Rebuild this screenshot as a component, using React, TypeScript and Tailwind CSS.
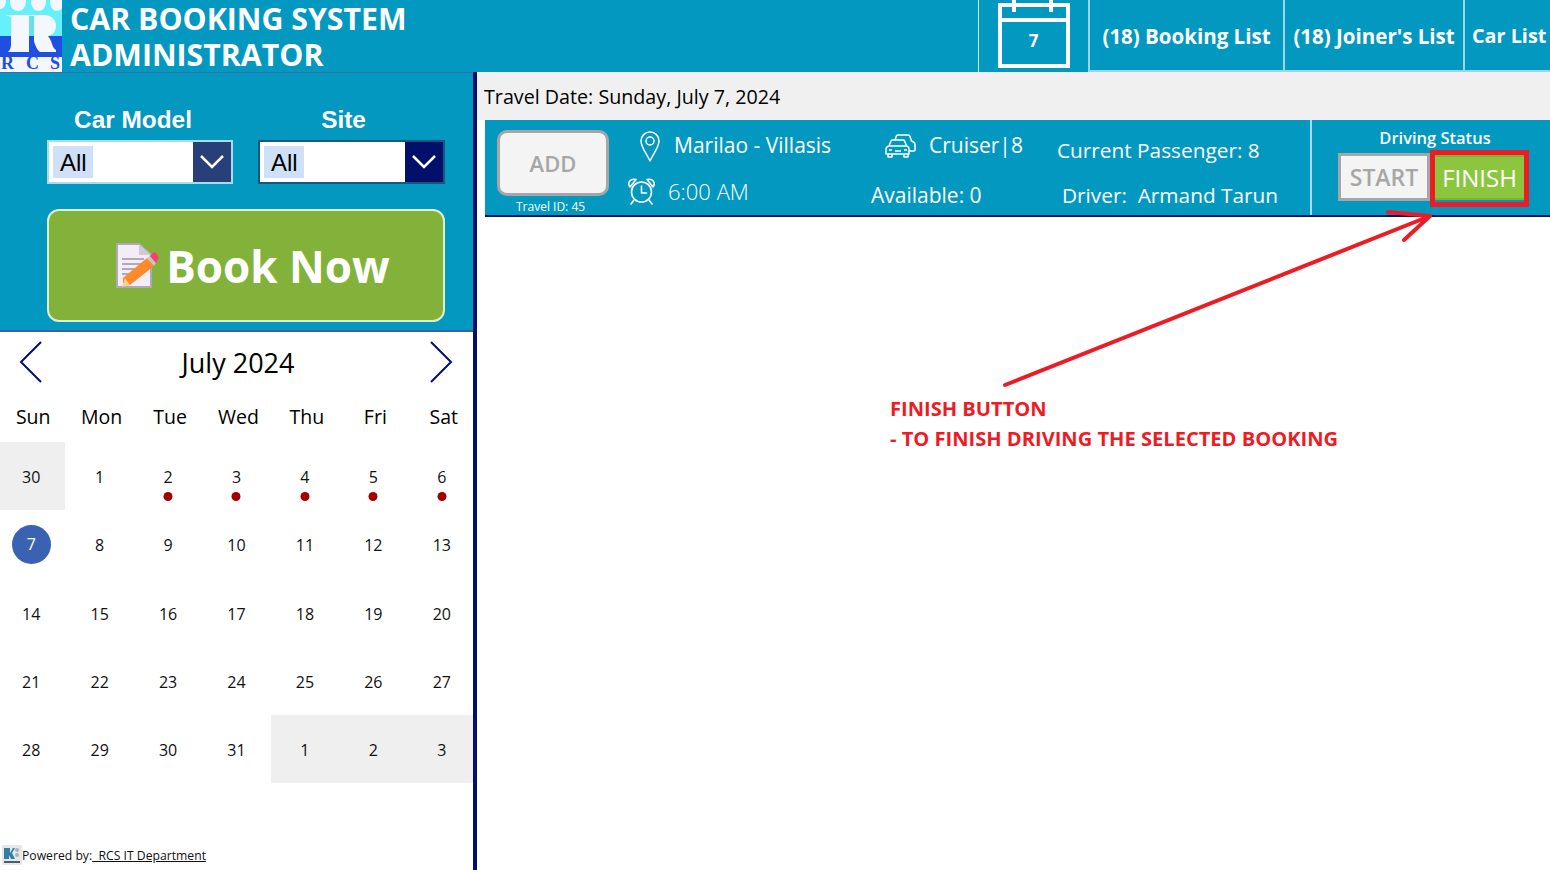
import React from "react";

const font = "font-['Open_Sans','Noto_Sans',sans-serif]";

const days = ["Sun", "Mon", "Tue", "Wed", "Thu", "Fri", "Sat"];
const cells = [
  30, 1, 2, 3, 4, 5, 6, 7, 8, 9, 10, 11, 12, 13, 14, 15, 16, 17, 18, 19, 20, 21, 22, 23, 24, 25, 26, 27, 28, 29, 30, 31,
  1, 2, 3,
];

function Logo() {
  return (
    <svg width="62" height="72" viewBox="0 0 62 72" className="shrink-0">
      <rect width="62" height="72" fill="#66f0fb" />
      <rect y="36" width="62" height="21" fill="#1f4fe0" />
      <rect y="57" width="62" height="15" fill="#f5f7ff" />
      <path d="M0 0h6c0 5-2 9-6 9zM10 0h16c0 7-3 11-8 11s-8-4-8-11zM31 0h15c0 7-3 11-7.500 11S31 7 31 0zM50 0h12v8c-1 2-3 3-5 3-4 0-7-4-7-11z" fill="#f5f7ff" />
      <path d="M6 15h38c8 0 12 5 12 11 0 5-3 9-8 10 2 2 3 5 4 8 1 3 2 5 4 6v2H40c-3-2-5-7-6-11v-5h-5v16H8c2-2 3-4 3-8V17z" fill="#f5f7ff" />
      <rect x="29" y="16" width="5" height="20" fill="#66e0ee" />
      <rect x="29" y="36" width="4" height="16" fill="#1f4fe0" />
      <g fontFamily="'Liberation Serif',serif" fontWeight="700" fontSize="18" fill="#1f4fe0">
        <text x="1" y="69">R</text>
        <text x="26" y="69">C</text>
        <text x="50" y="69">S</text>
      </g>
    </svg>
  );
}

function CalendarIcon() {
  return (
    <svg width="72" height="68" viewBox="0 0 72 68" fill="none" stroke="#fff" strokeWidth="4" className="shrink-0">
      <path d="M2 5h68v61H2zM2 20h68M16 0v12M53 0v12" />
    </svg>
  );
}

function PinIcon() {
  return (
    <svg width="20" height="31" viewBox="0 0 20 31" fill="none" stroke="#fff" strokeWidth="1.500" strokeLinejoin="round" className="shrink-0">
      <path d="M10 30C6.500 22 1 16.500 1 10a9 9 0 0 1 18 0c0 6.500-5.500 12-9 20z" />
      <circle cx="10" cy="10" r="4" />
    </svg>
  );
}

function ClockIcon() {
  return (
    <svg width="29" height="28" viewBox="0 0 29 28" fill="none" stroke="#fff" strokeWidth="1.600" strokeLinecap="round" strokeLinejoin="round" className="shrink-0">
      <circle cx="14.500" cy="15" r="10" />
      <path d="M14.500 9v7h5" />
      <path d="M3 10C0 6 3 1 9 2.500zM26 10c3-4 0-9-6-7.500z" />
      <path d="M7 23l-3 4M22 23l3 4" />
    </svg>
  );
}

function CarsIcon() {
  return (
    <svg width="31" height="24" viewBox="0 0 31 24" fill="none" stroke="#fff" strokeWidth="1.500" strokeLinejoin="round" className="shrink-0">
      <path d="M10 6l1.500-4.200C11.800 1 12.400 1 13 1h10c1 0 1.500.4 1.800 1l1.700 5c2 .6 3.500 1.600 3.500 3.500V16c0 .6-.5 1-1 1h-5" />
      <path d="M4 12l2-5c.3-.7.8-1 1.500-1H18c.8 0 1.300.3 1.600 1l2 5c1.600.5 2.400 1.500 2.400 3v5H1v-5c0-1.500 1.300-2.500 3-3zM4 12h18M3 20v3h4v-3M19 20v3h4v-3M4 16h3M19 16h3M10 17h6" />
    </svg>
  );
}

function NoteIcon() {
  return (
    <svg width="43" height="46" viewBox="0 0 43 46" className="shrink-0">
      <path d="M1 1h22l12 11v32H1z" fill="#f2edf8" stroke="#b0a8b8" strokeWidth="2" strokeLinejoin="round" />
      <path d="M23 1v11h12z" fill="#cfcad6" />
      <path d="M6 16h22M6 21h22M6 26h18M6 31h12" stroke="#9d90a6" strokeWidth="1.500" />
      <path d="M7 35l24-20 7 8-24 19-7 1z" fill="#ff8a2b" />
      <path d="M9 35l5 7-8 2z" fill="#ffd18b" />
      <path d="M31 15l3-2 6 7-2 3z" fill="#c9c4cf" />
      <path d="M34 13l3-3c1-1 2-1 3 0l2 3c1 1 1 2 0 3l-2 4z" fill="#ff3d6e" />
    </svg>
  );
}

function TinyLogo() {
  return (
    <svg width="20" height="20" viewBox="0 0 20 20" className="shrink-0 -mt-[3px]">
      <rect width="20" height="20" fill="#e4e8ea" />
      <path d="M2 3h6v5l3-5h2l-3 5 3 6H9L7 10v4H2z" fill="#2f7fa8" />
      <circle cx="15" cy="5" r="2" fill="#a8b4ba" />
      <circle cx="15" cy="10" r="2" fill="#a8b4ba" />
      <rect x="2" y="16" width="16" height="2" fill="#4a5f6b" />
    </svg>
  );
}

function Dropdown({ tone, border }: { tone: string; border: string }) {
  return (
    <div className={`flex h-[44px] border-2 ${border} bg-white`}>
      <div className="flex flex-1 items-center pl-[4px]">
        <span className="flex h-[32px] w-[40px] items-center bg-[#cfe1f9] pl-[7px] pt-[1px] font-['Liberation_Sans',sans-serif] text-[24px] text-black">
          All
        </span>
      </div>
      <div className={`flex w-[38px] items-center justify-center ${tone}`}>
        <svg width="24" height="14" viewBox="0 0 24 14" fill="none" stroke="#fff" strokeWidth="2.500">
          <path d="M1 1l11 11L23 1" />
        </svg>
      </div>
    </div>
  );
}

export default function App() {
  return (
    <div className={`flex h-[870px] w-[1550px] flex-col overflow-hidden bg-white ${font}`}>
      <header className="flex h-[72px] shrink-0 items-stretch bg-[#0398c0] text-white">
        <Logo />
        <h1 className="w-[916px] shrink-0 pl-[8px] pt-[1px] text-[30.300px] font-bold leading-[36px]">
          CAR BOOKING SYSTEM
          <br />
          ADMINISTRATOR
        </h1>
        <div className="flex w-[110px] shrink-0 justify-center border-l border-white/80">
          <div className="relative h-[68px]">
            <CalendarIcon />
            <span className="absolute inset-x-0 top-[28px] text-center text-[17px] font-bold">7</span>
          </div>
        </div>
        <div className="flex w-[195px] shrink-0 items-center justify-center border-b-2 border-l-2 border-white/60 pt-[2px] text-[20.500px] font-bold">
          (18) Booking List
        </div>
        <div className="flex w-[180px] shrink-0 items-center justify-center border-b-2 border-l-2 border-white/60 pt-[2px] text-[20.500px] font-bold">
          (18) Joiner's List
        </div>
        <div className="flex flex-1 items-center whitespace-nowrap border-b-2 border-l-2 border-white/60 pl-[7px] pt-[2px] text-[19.800px] font-bold">
          Car List
        </div>
      </header>

      <div className="flex min-h-0 flex-1">
        <aside className="flex w-[477px] shrink-0 flex-col border-r-4 border-[#02106b]">
          <div className="h-[260px] shrink-0 border-t border-[#3f6aa8] border-b-2 border-b-[#3c5fa8] bg-[#0398c0] pl-[47px] pr-[28px]">
            <div className="mt-[34px] flex gap-[25px]">
              <div className="w-[186px]">
                <div className="h-[33px] pr-[14px] text-center font-['Liberation_Sans',sans-serif] text-[24.400px] font-bold leading-[25px] text-white">
                  Car Model
                </div>
                <Dropdown tone="bg-[#27407a]" border="border-[#a9dcea]" />
              </div>
              <div className="w-[187px]">
                <div className="h-[33px] pr-[16px] text-center font-['Liberation_Sans',sans-serif] text-[24.400px] font-bold leading-[25px] text-white">
                  Site
                </div>
                <Dropdown tone="bg-[#02106b]" border="border-[#14587f]" />
              </div>
            </div>
            <button className="mt-[25px] flex h-[113px] w-full items-center justify-center gap-[7px] rounded-[12px] border-2 border-[#dff0d0] bg-[#82b23a] pl-[14px] text-white">
              <NoteIcon />
              <span className="text-[44px] font-bold leading-none">Book Now</span>
            </button>
          </div>

          <div className="relative flex flex-1 flex-col overflow-hidden">
            <div className="flex h-[63px] shrink-0 items-center justify-between pl-[19px] pr-[20px] text-[#02106b]">
              <svg width="24" height="42" viewBox="0 0 24 42" fill="none" stroke="#02106b" strokeWidth="2" className="-mt-[4px]">
                <path d="M22 1L2 21l20 20" />
              </svg>
              <span className="pl-[4px] text-[27px] text-black">July 2024</span>
              <svg width="24" height="42" viewBox="0 0 24 42" fill="none" stroke="#02106b" strokeWidth="2" className="-mt-[4px]">
                <path d="M2 1l20 20L2 41" />
              </svg>
            </div>
            <div className="ml-[-1px] grid h-[47px] w-[479px] shrink-0 grid-cols-7 items-center pb-[3px] text-center text-[19.500px] text-black">
              {days.map((d) => (
                <div key={d}>{d}</div>
              ))}
            </div>
            <div className="ml-[-3px] grid w-[479px] grid-cols-7 auto-rows-[68.300px] text-center text-[16px] text-[#111]">
              {cells.map((n, i) => {
                const muted = i === 0 || i > 31;
                const dot = i >= 2 && i <= 6;
                const selected = i === 7;
                return (
                  <div key={i} className={`relative flex items-center justify-center ${muted ? "bg-[#efefef]" : ""}`}>
                    {selected ? (
                      <span className="flex h-[39px] w-[39px] items-center justify-center rounded-full bg-[#3a62b3] text-white">
                        {n}
                      </span>
                    ) : (
                      <span className="pt-[2px]">{n}</span>
                    )}
                    {dot && <span className="absolute left-1/2 top-[50px] h-[9px] w-[9px] -translate-x-1/2 rounded-full bg-[#a30000]" />}
                  </div>
                );
              })}
            </div>
            <div className="mb-[3px] mt-auto flex h-[21px] items-center pl-[2px] text-[12.200px] text-[#111]">
              <TinyLogo />
              <span className="whitespace-nowrap">
                Powered by:
                <span className="underline">&nbsp; RCS IT Department</span>
              </span>
            </div>
          </div>
        </aside>

        <main className="relative flex min-w-0 flex-1 flex-col">
          <div className="flex h-[48px] shrink-0 items-center bg-[#f0f0f0] pl-[7px] pt-[2px] text-[19.700px] text-black">
            Travel Date: Sunday, July 7, 2024
          </div>
          <div className="ml-[8px] flex h-[97px] border-b-2 border-[#02106b] bg-[#0398c0] text-white">
            <div className="ml-[12px] mr-[18px] w-[112px] shrink-0 pt-[10px]">
              <div className="flex h-[66px] items-center justify-center rounded-[10px] border-[3px] border-[#a6a6a6] bg-[#f4f4f4] pt-[1px] text-[22px] font-semibold text-[#a6a6a6]">
                ADD
              </div>
              <div className="mt-[3px] whitespace-nowrap pl-[19px] text-[12px] leading-[16px]">Travel ID: 45</div>
            </div>
            <div className="w-[244px] shrink-0">
              <div className="flex h-[51px] items-center pl-[13px] pt-[1px]">
                <PinIcon />
                <span className="ml-[14px] text-[21px]">Marilao - Villasis</span>
              </div>
              <div className="flex h-[44px] items-center pb-[4px]">
                <ClockIcon />
                <span className="ml-[12px] text-[22px] font-light">6:00 AM</span>
              </div>
            </div>
            <div className="w-[186px] shrink-0">
              <div className="flex h-[51px] items-center pl-[14px]">
                <CarsIcon />
                <span className="ml-[13px] whitespace-nowrap pt-[1px] text-[21px]">Cruiser|8</span>
              </div>
              <div className="flex h-[46px] items-center pt-[3px] text-[21px]">Available: 0</div>
            </div>
            <div className="w-[253px] shrink-0 text-[20.800px]">
              <div className="flex h-[61px] items-center">Current Passenger: 8</div>
              <div className="flex h-[33px] items-center whitespace-pre pb-[3px] pl-[5px]">Driver:  Armand Tarun</div>
            </div>
            <div className="flex-1 border-l-2 border-[#a9dcea]">
              <div className="h-[30px] w-[246px] pt-[6px] text-center text-[16.500px] font-semibold leading-[24px]">Driving Status</div>
              <div className="ml-[26px] flex items-start">
                <div className="mt-[3px] flex h-[48px] w-[92px] items-center justify-center border-[3px] border-[#a6a6a6] bg-[#f4f4f4] text-[23px] font-semibold text-[#a6a6a6]">
                  START
                </div>
                <div className="h-[57px] w-[99px] border-[5px] border-[#ed1c24] bg-[#0398c0]">
                  <div className="flex h-[45px] items-center justify-center border-y-[2px] border-t-[#7fb338] border-b-[#7fb338] bg-[#8cc63f] text-[24px] font-medium">
                    FINISH
                  </div>
                </div>
              </div>
            </div>
          </div>

          <svg width="560" height="190" viewBox="0 0 560 190" fill="none" stroke="#ed1c24" strokeWidth="4" strokeLinecap="round" className="absolute left-[523px] top-[136px]">
            <path d="M5 177L430 8M388 4l42 4M404 32L430 8" />
          </svg>
          <div className="absolute left-[413px] top-[322px] text-[20.100px] font-bold leading-[30px] text-[#ed1c24]">
            <div>FINISH BUTTON</div>
            <div>- TO FINISH DRIVING THE SELECTED BOOKING</div>
          </div>
        </main>
      </div>
    </div>
  );
}
